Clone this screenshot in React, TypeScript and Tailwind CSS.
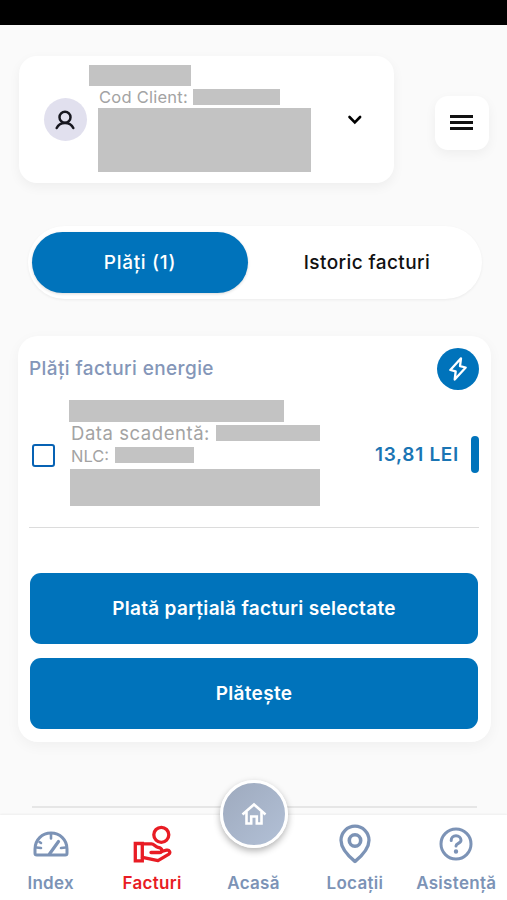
import type { ReactNode } from "react";

const GaugeIcon = () => (
  <svg width="36" height="26" viewBox="0 0 36 26" fill="none" stroke="currentColor" strokeWidth="3" strokeLinecap="round" strokeLinejoin="round">
    <path d="M2 18C2 9 9 2 18 2s16 7 16 16v4.2a1.800 1.800 0 0 1-1.800 1.800H3.800A1.800 1.800 0 0 1 2 22.200z" />
    <path d="M16.500 23 25.500 10.500" strokeWidth="3.200" />
    <path d="M18 3v4.500M3.500 16.500l4.500.5M28 17l4.500-.5M6.500 11l1.500 1" strokeWidth="2.600" />
  </svg>
);

const BillIcon = () => (
  <svg width="40" height="38" viewBox="0 0 40 38" fill="none" stroke="currentColor" strokeWidth="3.300" strokeLinejoin="round" strokeLinecap="round">
    <circle cx="29.300" cy="9.800" r="7.500" />
    <path d="M3.300 18.500h7v17.300h-7z" strokeLinejoin="miter" />
    <path d="M10.500 18.800h9c2.600 0 3.700 3 6.500 3.500 5 .9 5 5.200 1.500 5.200h-8.500" />
    <path d="M29.500 26.500l5-1.300c3-.6 4.500 2.300 2 4.200L26 35.700 10.500 32.300" />
  </svg>
);

const PinIcon = () => (
  <svg width="32" height="40" viewBox="0 0 32 40" fill="none" stroke="currentColor" strokeWidth="3.300" strokeLinejoin="round">
    <path d="M16 37.500c-3-2.500-14-11.500-14-21.300a14 14 0 0 1 28 0C30 26 19 35 16 37.500z" />
    <circle cx="16" cy="16.500" r="5.700" strokeWidth="3.600" />
  </svg>
);

const HelpIcon = () => (
  <svg width="34" height="34" viewBox="0 0 34 34" fill="none" stroke="currentColor" strokeWidth="3" strokeLinecap="round">
    <circle cx="17" cy="17" r="15" />
    <path d="M12.200 13.500c0-2.800 2-4.700 4.800-4.700s5 1.900 5 4.500c0 3.200-5 3-5 5.700" />
    <circle cx="17" cy="24.500" r="1.200" fill="currentColor" strokeWidth="2" />
  </svg>
);

const HomeIcon = () => (
  <svg width="26" height="24" viewBox="0 0 26 24" fill="none" stroke="white" strokeWidth="2.600">
    <path d="M1.500 12.500 13 2.500l11.500 10" />
    <path d="M5.500 10v11.500h4.700v-7h5.600v7h4.700V10" />
  </svg>
);

const Redacted = ({ className }: { className: string }) => (
  <div className={`bg-[#c3c3c3] ${className}`} />
);

const PayButton = ({ children }: { children: ReactNode }) => (
  <button className="block h-[71px] w-full rounded-[11px] bg-[#0073bb] pt-0.5 text-[19px] font-semibold tracking-[0.3px] text-white">
    {children}
  </button>
);

const navItems = [
  { label: "Index", icon: <GaugeIcon />, color: "text-[#7c93b6]" },
  { label: "Facturi", icon: <BillIcon />, color: "text-[#e81c24]" },
  { label: "Acasă", icon: null, color: "text-[#7c93b6]" },
  { label: "Locații", icon: <PinIcon />, color: "text-[#7c93b6]" },
  { label: "Asistență", icon: <HelpIcon />, color: "text-[#7c93b6]" },
];

export default function App() {
  return (
    <div className="flex h-[900px] w-[507px] flex-col overflow-hidden bg-[#fafafa] font-['Inter',sans-serif]">
      <div className="h-[25px] shrink-0 bg-black" />

      <header className="mt-[31px] flex h-[127px] shrink-0 items-start pl-[19px]">
        <div className="flex h-[127px] w-[375px] rounded-[18px] bg-white shadow-[0_4px_12px_rgba(0,0,0,0.05)]">
          <div className="mt-[42px] ml-[25px] flex size-[43px] items-center justify-center rounded-full bg-[#e1e0ee] pr-px">
            <svg width="20" height="20" viewBox="0 0 20 20" fill="none" stroke="#17171f" strokeWidth="2.500" strokeLinecap="round">
              <circle cx="10" cy="7.300" r="5.500" />
              <path d="M1.700 18c1.600-3.400 4.500-5 8.300-5s6.700 1.600 8.300 5" />
            </svg>
          </div>
          <div className="ml-[2px] w-[222px] pt-[9px]">
            <Redacted className="h-[21px] w-[102px]" />
            <div className="ml-[10px] flex h-[22px] items-center">
              <span className="w-[94px] pt-px text-[16.500px] tracking-[0.250px] whitespace-nowrap text-[#a3a3a3]">Cod Client:</span>
              <Redacted className="h-4 w-[87px]" />
            </div>
            <Redacted className="ml-[9px] h-16 w-[213px]" />
          </div>
          <svg className="mt-[57px] ml-[36px]" width="16" height="14" viewBox="0 0 16 14" fill="none" stroke="#000" strokeWidth="2.600" strokeLinecap="round">
            <path d="m2.500 4 5.300 5.300L13.100 4" />
          </svg>
        </div>
        <button className="mt-10 ml-[41px] flex size-[54px] flex-col items-center justify-center gap-[3px] rounded-[13px] bg-white pr-px pb-px shadow-[0_4px_12px_rgba(0,0,0,0.05)]">
          <span className="h-[3px] w-[23px] bg-[#111]" />
          <span className="h-[3px] w-[23px] bg-[#111]" />
          <span className="h-[3px] w-[23px] bg-[#111]" />
        </button>
      </header>

      <div className="mt-[43px] ml-[28px] flex h-[73px] w-[454px] shrink-0 items-center rounded-full bg-white pl-1 text-[19px] font-medium shadow-[0_1px_3px_rgba(0,0,0,0.06)]">
        <button className="h-[61px] w-[216px] rounded-full bg-[#0073bb] pt-0.5 tracking-[0.700px] text-white shadow-[0_1px_3px_rgba(0,0,0,0.15)]">Plăți (1)</button>
        <button className="ml-1 flex-1 pt-0.5 tracking-[0.400px] text-[#111]">Istoric facturi</button>
      </div>

      <main className="mt-[37px] ml-[18px] h-[406px] w-[473px] shrink-0 rounded-[20px] bg-white px-[11px] pt-3 shadow-[0_4px_14px_rgba(0,0,0,0.045)]">
        <div className="flex h-[42px] items-center justify-between pr-px">
          <h2 className="pt-px text-[19px] font-medium tracking-[0.400px] text-[#8496b8]">Plăți facturi energie</h2>
          <div className="flex size-[42px] items-center justify-center rounded-full bg-[#0073bb]">
            <svg width="20" height="26" viewBox="0 0 20 26" fill="none" stroke="white" strokeWidth="2.300" strokeLinejoin="round">
              <path d="M13 2.300 2.300 14l5.400 1.300L6.700 23.500 17.700 11.500 12 10.200z" />
            </svg>
          </div>
        </div>

        <div className="mr-px flex h-[138px] border-b-[1.500px] border-[#dcdcdc]">
          <div className="mt-[54px] ml-[3px] size-[23px] rounded-[3px] border-[2.500px] border-[#0762b4]" />
          <div className="ml-[14px] w-[251px] pt-[10px]">
            <Redacted className="h-[22px] w-[215px]" />
            <div className="ml-0.5 flex h-[22px] items-center">
              <span className="w-[145px] pt-0.5 text-[18.500px] tracking-[0.550px] whitespace-nowrap text-[#a3a3a3]">Data scadentă:</span>
              <Redacted className="h-4 w-[104px]" />
            </div>
            <div className="ml-0.5 flex h-[22px] items-center">
              <span className="w-[44px] pt-0.5 text-[16.500px] whitespace-nowrap text-[#a3a3a3]">NLC:</span>
              <Redacted className="h-4 w-[79px]" />
            </div>
            <Redacted className="mt-[3px] ml-px h-[37px] w-[250px]" />
          </div>
          <div className="mt-[46px] flex h-[37px] flex-1 items-center justify-end gap-[12px] self-start">
            <span className="pt-0.5 text-[19px] font-semibold tracking-[0.700px] text-[#1a75b4]">13,81 LEI</span>
            <span className="h-[37px] w-2 rounded-full bg-[#0073bb]" />
          </div>
        </div>

        <div className="mt-[45px] mr-[2px] ml-px space-y-[14px]">
          <PayButton>Plată parțială facturi selectate</PayButton>
          <PayButton>Plătește</PayButton>
        </div>
      </main>

      <div className="mt-[64px] ml-8 h-[2px] w-[445px] shrink-0 bg-[#e6e6e6]" />

      <nav className="relative mt-[7px] grid flex-1 grid-cols-5 bg-white shadow-[0_-1px_2px_rgba(0,0,0,0.05)]">
        {navItems.map((item) => (
          <div key={item.label} className={`flex flex-col items-center ${item.color}`}>
            <div className="mt-[9px] flex h-10 items-center">{item.icon}</div>
            <span className="mt-[9px] text-[17px] leading-5 font-semibold tracking-[0.300px] whitespace-nowrap">{item.label}</span>
          </div>
        ))}
        <div className="absolute -top-[35px] left-[220px] flex size-[68px] items-center justify-center rounded-full border-[3px] border-white bg-gradient-to-br from-[#9eaabe] to-[#b2c0d6] shadow-[0_3px_7px_rgba(0,0,0,0.3)]">
          <HomeIcon />
        </div>
      </nav>
    </div>
  );
}
